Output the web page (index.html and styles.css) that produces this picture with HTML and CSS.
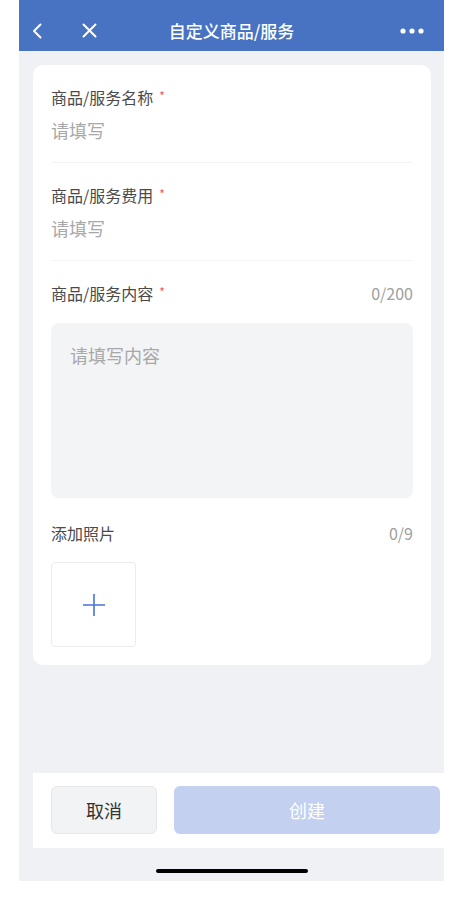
FILE: index.html
```html
<!DOCTYPE html>
<html lang="zh-CN">
<head>
  <meta charset="UTF-8" />
  <meta name="viewport" content="width=device-width, initial-scale=1.0"/>
  <title>自定义商品/服务</title>
  <link rel="stylesheet" href="styles.css">
</head>
<body>

<div class="phone">
  <div class="navbar">
    <div class="nav-left">
      <svg class="icon-back" width="10" height="16" viewBox="0 0 10 16"><polyline points="8.5,1.5 2,8 8.5,14.5" fill="none" stroke="#fff" stroke-width="2" stroke-linecap="round" stroke-linejoin="round"/></svg>
      <svg class="icon-close" width="15" height="15" viewBox="0 0 15 15"><path d="M1.5 1.5L13.5 13.5M13.5 1.5L1.5 13.5" stroke="#fff" stroke-width="2" stroke-linecap="round"/></svg>
    </div>
    <div class="nav-title">自定义商品/服务</div>
    <div class="nav-right">
      <svg width="24" height="6" viewBox="0 0 24 6"><circle cx="3" cy="3" r="2.6" fill="#fff"/><circle cx="12" cy="3" r="2.6" fill="#fff"/><circle cx="21" cy="3" r="2.6" fill="#fff"/></svg>
    </div>
  </div>

  <div class="card">
    <div class="field">
      <div class="label">商品/服务名称<span class="req">*</span></div>
      <div class="placeholder">请填写</div>
    </div>
    <div class="field">
      <div class="label">商品/服务费用<span class="req">*</span></div>
      <div class="placeholder">请填写</div>
    </div>
    <div class="field field-last">
      <div class="label-row">
        <div class="label">商品/服务内容<span class="req">*</span></div>
        <div class="count">0/200</div>
      </div>
      <div class="textbox">请填写内容</div>
      <div class="label-row photo-row">
        <div class="label">添加照片</div>
        <div class="count">0/9</div>
      </div>
      <div class="upload">
        <svg width="24" height="24" viewBox="0 0 24 24"><path d="M12 1V23M1 12H23" stroke="#4a72dc" stroke-width="1.6"/></svg>
      </div>
    </div>
  </div>

  <div class="footer">
    <button class="btn btn-cancel">取消</button>
    <button class="btn btn-create">创建</button>
  </div>
  <div class="home">
    <div class="home-bar"></div>
  </div>
</div>

</body>
</html>
```

FILE: styles.css
```css
html, body {
  margin: 0;
  padding: 0;
  background: #fff;
  font-family: "Noto Sans CJK SC", "Noto Sans", sans-serif;
}
.phone {
  margin-left: 19px;
  width: 425px;
  height: 881px;
  background: #f0f1f5;
  display: flex;
  flex-direction: column;
}
.navbar {
  height: 41px;
  padding-top: 10px;
  background: #4873c2;
  display: grid;
  grid-template-columns: 1fr auto 1fr;
  align-items: center;
  color: #fff;
}
.nav-left {
  display: flex;
  align-items: center;
  padding-left: 13px;
}
.icon-back {
  margin-right: 40px;
}
.nav-title {
  font-size: 17px;
  font-weight: 500;
  line-height: 24px;
}
.nav-right {
  display: flex;
  justify-content: flex-end;
  padding-right: 20px;
}
.card {
  margin: 14px 13px 0 14px;
  padding: 0 18px;
  background: #fff;
  border-radius: 10px;
}
.field {
  padding: 21px 0 20px;
  border-bottom: 1px solid #f3f3f5;
}
.field-last {
  border-bottom: none;
  padding-bottom: 18px;
}
.label {
  font-size: 16px;
  line-height: 22px;
  height: 22px;
  color: #4a4a4a;
}
.req {
  color: #f2566a;
  font-size: 12px;
  line-height: 0;
  margin-left: 6px;
  vertical-align: 3px;
}
.placeholder {
  margin-top: 10px;
  font-size: 18px;
  line-height: 24px;
  color: #a8a8a8;
}
.label-row {
  display: flex;
  justify-content: space-between;
  align-items: baseline;
  height: 22px;
}
.count {
  font-size: 16px;
  line-height: 22px;
  color: #a0a0a0;
}
.textbox {
  margin-top: 19px;
  height: 135px;
  padding: 20px 19px;
  background: #f3f4f6;
  border-radius: 8px;
  font-size: 18px;
  line-height: 24px;
  color: #a8a8a8;
}
.photo-row {
  margin-top: 24px;
}
.upload {
  margin-top: 18px;
  width: 83px;
  height: 83px;
  border: 1px solid #ebecef;
  border-radius: 4px;
  display: flex;
  align-items: center;
  justify-content: center;
}
.footer {
  margin-top: auto;
  margin-left: 14px;
  height: 75px;
  padding: 13px 4px 0 18px;
  box-sizing: border-box;
  background: #fff;
  display: flex;
  gap: 17px;
}
.btn {
  height: 48px;
  border-radius: 6px;
  font-family: inherit;
  font-size: 18px;
  padding: 0;
}
.btn-cancel {
  width: 106px;
  background: #f2f3f5;
  border: 1px solid #e6e7eb;
  color: #333;
}
.btn-create {
  flex: 1;
  background: #c3d0f0;
  border: none;
  color: #fff;
}
.home {
  height: 33px;
  display: flex;
  justify-content: center;
}
.home-bar {
  margin-top: 21px;
  width: 152px;
  height: 4px;
  border-radius: 2px;
  background: #000;
}
```
